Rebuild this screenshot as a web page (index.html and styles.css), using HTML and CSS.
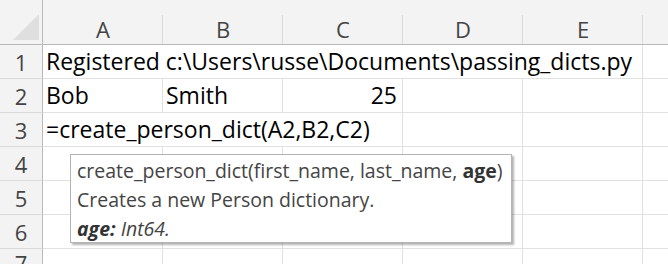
FILE: index.html
```html
<!DOCTYPE html>
<html lang="en">
<head>
    <meta charset="utf-8">
    <title>Sheet</title>
    <link rel="stylesheet" href="styles.css">
</head>
<body>
    <div class="sheet">
        <!-- column headers -->
        <div class="corner"><span class="corner-mark"></span></div>
        <div class="col-head">A</div>
        <div class="col-head">B</div>
        <div class="col-head">C</div>
        <div class="col-head">D</div>
        <div class="col-head">E</div>
        <div class="col-head col-rest"></div>

        <!-- row 1 -->
        <div class="row-head">1</div>
        <div class="cell span-5">Registered c:\Users\russe\Documents\passing_dicts.py</div>
        <div class="cell cell-rest"></div>

        <!-- row 2 -->
        <div class="row-head">2</div>
        <div class="cell">Bob</div>
        <div class="cell">Smith</div>
        <div class="cell num">25</div>
        <div class="cell"></div>
        <div class="cell"></div>
        <div class="cell cell-rest"></div>

        <!-- row 3 -->
        <div class="row-head">3</div>
        <div class="cell span-3">=create_person_dict(A2,B2,C2)</div>
        <div class="cell"></div>
        <div class="cell"></div>
        <div class="cell cell-rest"></div>

        <!-- rows 4-7 empty -->
        <div class="row-head">4</div>
        <div class="cell"></div><div class="cell"></div><div class="cell"></div><div class="cell"></div><div class="cell"></div>
        <div class="cell cell-rest"></div>

        <div class="row-head">5</div>
        <div class="cell"></div><div class="cell"></div><div class="cell"></div><div class="cell"></div><div class="cell"></div>
        <div class="cell cell-rest"></div>

        <div class="row-head">6</div>
        <div class="cell"></div><div class="cell"></div><div class="cell"></div><div class="cell"></div><div class="cell"></div>
        <div class="cell cell-rest"></div>

        <div class="row-head row-last">7</div>
        <div class="cell"></div><div class="cell"></div><div class="cell"></div><div class="cell"></div><div class="cell"></div>
        <div class="cell cell-rest"></div>

        <!-- function tooltip -->
        <div class="tip">
            <div class="tip-line">create_person_dict(first_name, last_name, <b>age</b>)</div>
            <div class="tip-line">Creates a new Person dictionary.</div>
            <div class="tip-line"><i><b>age:</b> Int64.</i></div>
        </div>
    </div>
</body>
</html>
```

FILE: styles.css
```css
* {
    box-sizing: border-box;
}

html, body {
    margin: 0;
    padding: 0;
    background: #fff;
    overflow: hidden;
}

body {
    width: 668px;
    height: 264px;
    font-family: "Open Sans", "Noto Sans", sans-serif;
}

.sheet {
    position: relative;
    display: grid;
    grid-template-columns: 43px repeat(5, 120px) 1fr;
    grid-template-rows: 45px repeat(6, 34px) 16px;
    height: 264px;
    overflow: hidden;
}

.corner {
    background: #f3f3f3;
    border-right: 1px solid #b9b9b9;
    border-bottom: 1px solid #b9b9b9;
    position: relative;
}

.corner-mark {
    position: absolute;
    left: 13px;
    top: 14px;
    width: 26px;
    height: 26px;
    background: #dfdfdf;
    clip-path: polygon(100% 0, 100% 100%, 0 100%);
}

.col-head {
    background: #f3f3f3;
    border-bottom: 1px solid #b9b9b9;
    color: #444;
    font-size: 22px;
    line-height: 28px;
    display: flex;
    align-items: flex-end;
    justify-content: center;
    padding-bottom: 1px;
    position: relative;
}

.col-head::after {
    content: '';
    position: absolute;
    right: 0;
    top: 15px;
    bottom: 0;
    width: 1px;
    background: #dadada;
}

.col-rest::after {
    display: none;
}

.row-head {
    background: #f3f3f3;
    border-right: 1px solid #b9b9b9;
    border-bottom: 1px solid #dadada;
    color: #444;
    font-size: 22px;
    display: flex;
    align-items: center;
    justify-content: center;
}

.row-last {
    align-items: flex-start;
    line-height: 28px;
}

.cell {
    border-right: 1px solid #e1e1e1;
    border-bottom: 1px solid #e1e1e1;
    color: #000;
    font-size: 23px;
    padding: 0 5px 1px 3px;
    white-space: nowrap;
    display: flex;
    align-items: center;
}

.cell.num {
    justify-content: flex-end;
}

.span-5 {
    grid-column: span 5;
}

.span-3 {
    grid-column: span 3;
}

.cell-rest {
    border-right: none;
}

.tip {
    position: absolute;
    left: 70px;
    top: 154px;
    width: 442px;
    height: 89px;
    background: #fff;
    border: 1px solid #b4b4b4;
    box-shadow: 2px 2px 2px rgba(0, 0, 0, 0.3);
    padding: 1px 6px;
    color: #444;
    font-size: 19.5px;
}

.tip-line {
    height: 29px;
    line-height: 29px;
    white-space: nowrap;
}

.tip b {
    color: #333;
}
```
